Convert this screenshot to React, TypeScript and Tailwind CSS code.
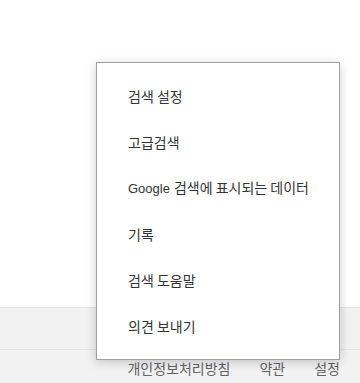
import React from 'react'

const menuItems: React.ReactNode[] = [
  '검색 설정',
  '고급검색',
  <>
    <span className="mr-[4px] text-[13px] [font-family:'Liberation_Sans',sans-serif]">Google</span>
    검색에 표시되는 데이터
  </>,
  '기록',
  '검색 도움말',
  '의견 보내기',
]

const footerLinks = ['개인정보처리방침', '약관', '설정']

export default function App() {
  return (
    <div
      className="relative h-[383px] w-[360px] overflow-hidden bg-white"
      style={{ fontFamily: '"Noto Sans CJK KR", "Liberation Sans", sans-serif' }}
    >
      {/* Page body */}
      <div className="h-[307px]" />

      {/* Footer */}
      <div className="bg-[#f2f2f2]">
        <div className="h-[42px] border-t border-[#e4e4e4]" />
        <div className="flex h-[34px] items-center justify-end gap-[29px] border-t border-[#e4e4e4] pr-[20px] pt-[3px] text-[14px] text-[#5f6368]">
          {footerLinks.map((l) => (
            <a key={l} className="cursor-pointer">
              {l}
            </a>
          ))}
        </div>
      </div>

      {/* Settings dropdown */}
      <div className="absolute left-[96px] top-[62px] w-[244px] border border-[#a0a0a0] bg-white py-[10px] shadow-[0_2px_10px_rgba(0,0,0,0.2)]">
        {menuItems.map((item, i) => (
          <div
            key={i}
            className="flex h-[46px] items-center pl-[31px] text-[14px] text-[#333333]"
          >
            <span>{item}</span>
          </div>
        ))}
      </div>
    </div>
  )
}
